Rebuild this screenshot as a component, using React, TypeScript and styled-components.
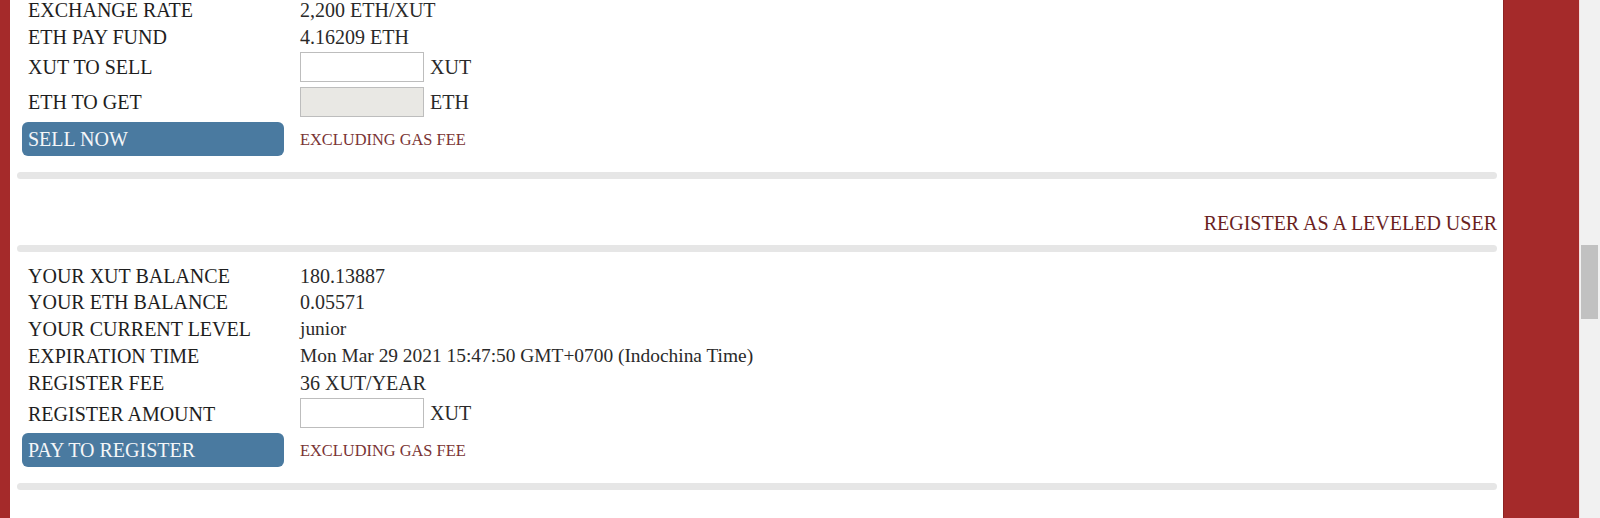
import React from 'react';
import styled, { createGlobalStyle } from 'styled-components';

const GlobalStyle = createGlobalStyle`
  html, body {
    margin: 0;
    padding: 0;
    height: 518px;
    overflow: hidden;
    background: #ffffff;
  }
  #root {
    height: 100%;
  }
`;

const Shell = styled.div`
  display: flex;
  height: 518px;
  font-family: 'Liberation Serif', 'DejaVu Serif', serif;
  color: #222;
`;

const EdgeStrip = styled.div<{ w: number }>`
  flex: 0 0 ${({ w }) => w}px;
  background: #a52a2a;
`;

const SideColumn = styled(EdgeStrip)`
  border-left: 1px solid #8d2323;
  box-sizing: border-box;
`;

const ScrollTrack = styled.div`
  flex: 0 0 21px;
  background: #f1f1f1;
  border-left: 1px solid #f6dede;
  box-sizing: border-box;
  padding: 245px 0 0 1px;
`;

const ScrollThumb = styled.div`
  width: 17px;
  height: 74px;
  background: #c1c1c1;
`;

const Main = styled.main`
  flex: 1;
  overflow: hidden;
  display: flex;
  flex-direction: column;
`;

const Divider = styled.div<{ top: number }>`
  height: 7px;
  margin: ${({ top }) => top}px 6px 0 7px;
  background: #e6e6e6;
  border-radius: 4px;
`;

const Form = styled.div<{ top: number; lh: number }>`
  display: grid;
  grid-template-columns: 278px 1fr;
  align-items: center;
  margin: ${({ top }) => top}px 0 0 12px;
  font-size: 20px;
  line-height: ${({ lh }) => lh}px;
`;

const Label = styled.div`
  padding-left: 6px;
  color: #1e1e1e;
  white-space: nowrap;
`;

const Value = styled.div<{ compact?: boolean }>`
  color: #2a2a2a;
  display: flex;
  align-items: center;
  gap: 6px;
  white-space: nowrap;
  font-size: ${({ compact }) => (compact ? '19.4px' : 'inherit')};
`;

const InputCell = styled(Value)`
  padding: 2px 0 3px;
`;

const AmountInput = styled.input<{ locked?: boolean }>`
  box-sizing: border-box;
  width: 124px;
  height: 30px;
  margin: 0;
  border: 1px solid #bdbdbd;
  background: ${({ locked }) => (locked ? '#e9e8e4' : '#ffffff')};
  font: inherit;
  padding: 0 4px;
  outline: none;
`;

const ActionButton = styled.button`
  box-sizing: border-box;
  width: 262px;
  height: 34px;
  margin: 2px 0 0;
  padding: 0 6px;
  border: none;
  border-radius: 6px;
  background: #4a7aa0;
  color: #f4f6f8;
  font-family: inherit;
  font-size: 20px;
  text-align: left;
  cursor: pointer;
`;

const FeeNote = styled.span`
  margin-top: 4px;
  font-size: 16.4px;
  color: #7a3434;
`;

const SectionTitle = styled.div`
  margin: 31px 6px 0 0;
  text-align: right;
  font-size: 20px;
  line-height: 26.7px;
  color: #6a1f1f;
`;

type Row = { label: string; value: string; compact?: boolean };

const InfoRows = ({ rows }: { rows: Row[] }) => (
  <>
    {rows.map((r) => (
      <React.Fragment key={r.label}>
        <Label>{r.label}</Label>
        <Value compact={r.compact}>{r.value}</Value>
      </React.Fragment>
    ))}
  </>
);

export default function App() {
  return (
    <>
      <GlobalStyle />
      <Shell>
        <EdgeStrip w={10} />
        <Main>
          <Form top={-3} lh={26.5}>
            <InfoRows
              rows={[
                { label: 'EXCHANGE RATE', value: '2,200 ETH/XUT' },
                { label: 'ETH PAY FUND', value: '4.16209 ETH' },
              ]}
            />
            <Label>XUT TO SELL</Label>
            <InputCell>
              <AmountInput type="text" />
              XUT
            </InputCell>
            <Label>ETH TO GET</Label>
            <InputCell>
              <AmountInput type="text" locked disabled />
              ETH
            </InputCell>
            <ActionButton type="button">SELL NOW</ActionButton>
            <FeeNote>EXCLUDING GAS FEE</FeeNote>
          </Form>
          <Divider top={16} />

          <SectionTitle>REGISTER AS A LEVELED USER</SectionTitle>
          <Divider top={8} />

          <Form top={11} lh={26.75}>
            <InfoRows
              rows={[
                { label: 'YOUR XUT BALANCE', value: '180.13887' },
                { label: 'YOUR ETH BALANCE', value: '0.05571' },
                { label: 'YOUR CURRENT LEVEL', value: 'junior', compact: true },
                {
                  label: 'EXPIRATION TIME',
                  value: 'Mon Mar 29 2021 15:47:50 GMT+0700 (Indochina Time)',
                  compact: true,
                },
                { label: 'REGISTER FEE', value: '36 XUT/YEAR' },
              ]}
            />
            <Label>REGISTER AMOUNT</Label>
            <InputCell>
              <AmountInput type="text" />
              XUT
            </InputCell>
            <ActionButton type="button">PAY TO REGISTER</ActionButton>
            <FeeNote>EXCLUDING GAS FEE</FeeNote>
          </Form>
          <Divider top={16} />
        </Main>
        <SideColumn w={76} />
        <ScrollTrack>
          <ScrollThumb />
        </ScrollTrack>
      </Shell>
    </>
  );
}
